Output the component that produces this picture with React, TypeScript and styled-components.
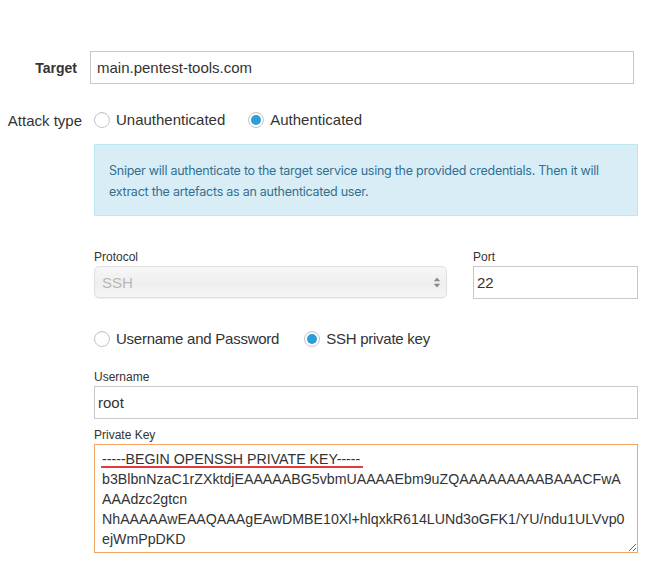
import React from 'react';
import styled, { createGlobalStyle } from 'styled-components';

const GlobalStyle = createGlobalStyle`
  html, body { margin: 0; padding: 0; background: #fff; }
  body { font-family: "Liberation Sans", Arial, Helvetica, sans-serif; color: #333; }
  * { box-sizing: border-box; }
`;

const Page = styled.div`
  width: 670px;
  height: 566px;
  overflow: hidden;
  padding-top: 51px;
`;

const Row = styled.div<{ $mt?: number }>`
  display: grid;
  grid-template-columns: 82px 1fr;
  align-items: center;
  margin-top: ${p => p.$mt ?? 0}px;
`;

const RowLabel = styled.label<{ $bold?: boolean; $pr?: number }>`
  text-align: right;
  font-size: ${p => (p.$bold ? 14 : 15)}px;
  font-weight: ${p => (p.$bold ? 700 : 400)};
  padding-right: ${p => p.$pr ?? 0}px;
  color: #333;
  white-space: nowrap;
`;

const TextInput = styled.input<{ $pl?: number; $ml?: number; $w?: number }>`
  display: block;
  height: 33px;
  width: ${p => (p.$w ? `${p.$w}px` : '100%')};
  margin-left: ${p => p.$ml ?? 0}px;
  border: 1px solid #c8c8c8;
  border-radius: 0;
  padding: 0 ${p => p.$pl ?? 3}px;
  font-family: "Liberation Sans", Arial, Helvetica, sans-serif;
  font-size: 15px;
  color: #333;
  background: #fff;
  outline: none;
`;

const RadioGroup = styled.div<{ $gap: number; $ml?: number }>`
  display: flex;
  align-items: center;
  gap: ${p => p.$gap}px;
  height: 20px;
  margin-left: ${p => p.$ml ?? 0}px;
`;

const RadioOption = styled.label<{ $tight?: boolean }>`
  display: flex;
  align-items: center;
  gap: 6px;
  font-size: 15px;
  letter-spacing: ${p => (p.$tight ? '-0.25px' : '0')};
  color: #333;
  line-height: 20px;
  white-space: nowrap;
`;

const RadioCircle = styled.span<{ $checked?: boolean }>`
  position: relative;
  width: 16px;
  height: 16px;
  border-radius: 50%;
  border: 1px solid #c6c6c6;
  background: #fff;
  box-shadow: inset 0 1px 1px rgba(0, 0, 0, 0.06);
  flex: none;
  &::after {
    content: '';
    display: ${p => (p.$checked ? 'block' : 'none')};
    position: absolute;
    left: 2px;
    top: 2px;
    width: 10px;
    height: 10px;
    border-radius: 50%;
    background: #2b9ed8;
  }
`;

const Section = styled.div`
  margin-left: 94px;
  width: 544px;
`;

const Alert = styled.div`
  margin-top: 14px;
  height: 72px;
  background: #d9edf7;
  border: 1px solid #bce8f1;
  padding: 15px 14px 0 14px;
  font-family: Inter, "Liberation Sans", sans-serif;
  font-size: 12.5px;
  letter-spacing: -0.25px;
  line-height: 21px;
  color: #31708f;
`;

const TwoCols = styled.div`
  display: grid;
  grid-template-columns: 353px 165px;
  column-gap: 26px;
  margin-top: 34px;
`;

const FieldLabel = styled.div<{ $mt?: number }>`
  font-size: 12px;
  line-height: 14px;
  color: #333;
  margin-top: ${p => p.$mt ?? 0}px;
  margin-bottom: 2px;
`;

const SelectWrap = styled.div`
  position: relative;
  margin-top: 1px;
`;

const Select = styled.select`
  display: block;
  width: 100%;
  height: 32px;
  appearance: none;
  -webkit-appearance: none;
  border: 1px solid #d2d2d2;
  border-radius: 5px;
  background: linear-gradient(#f4f4f4, #e8e8e8 55%, #f2f2f2);
  box-shadow: 0 1px 1px rgba(0, 0, 0, 0.1);
  padding: 0 7px;
  font-family: "Liberation Sans", Arial, Helvetica, sans-serif;
  font-size: 15px;
  color: #9a9a9a;
  outline: none;
`;

const SelectArrows = styled.svg`
  position: absolute;
  right: 6px;
  top: 11px;
  pointer-events: none;
`;

const RadioRow = styled.div`
  margin-top: 30px;
`;

const TextAreaWrap = styled.div`
  position: relative;
`;

const KeyArea = styled.textarea`
  display: block;
  width: 544px;
  height: 109px;
  border: 1px solid #f2a767;
  border-radius: 0;
  padding: 4px 7px;
  font-family: "Liberation Sans", Arial, Helvetica, sans-serif;
  font-size: 14.2px;
  line-height: 20px;
  color: #333;
  white-space: pre;
  overflow: hidden;
  resize: vertical;
  outline: none;
  background: #fff;
`;

const SpellMark = styled.span`
  position: absolute;
  left: 7px;
  top: 22px;
  width: 262px;
  height: 2px;
  background: #e5393a;
  pointer-events: none;
`;

const keyText = [
  '-----BEGIN OPENSSH PRIVATE KEY-----',
  'b3BlbnNzaC1rZXktdjEAAAAABG5vbmUAAAAEbm9uZQAAAAAAAAABAAACFwA',
  'AAAdzc2gtcn',
  'NhAAAAAwEAAQAAAgEAwDMBE10Xl+hlqxkR614LUNd3oGFK1/YU/ndu1ULVvp0',
  'ejWmPpDKD',
  'bA4d6eXmZ3v1fTkL9wQ2sJ8nR0cYhUpE7aKxGz5VqB3oNiM1tWlD6rSyF4g',
].join('\n');

export default function App() {
  return (
    <>
      <GlobalStyle />
      <Page>
        <Row>
          <RowLabel $bold $pr={5}>Target</RowLabel>
          <TextInput $pl={6} $ml={8} $w={544} defaultValue="main.pentest-tools.com" />
        </Row>
        <Row $mt={26}>
          <RowLabel>Attack type</RowLabel>
          <RadioGroup $gap={23} $ml={12}>
            <RadioOption>
              <RadioCircle />
              Unauthenticated
            </RadioOption>
            <RadioOption>
              <RadioCircle $checked />
              Authenticated
            </RadioOption>
          </RadioGroup>
        </Row>
        <Section>
          <Alert>
            Sniper will authenticate to the target service using the provided credentials. Then it will
            extract the artefacts as an authenticated user.
          </Alert>
          <TwoCols>
            <div>
              <FieldLabel>Protocol</FieldLabel>
              <SelectWrap>
                <Select disabled defaultValue="SSH">
                  <option>SSH</option>
                </Select>
                <SelectArrows width="8" height="11" viewBox="0 0 8 11">
                  <path d="M4 0.5 L7.2 4.3 H0.8 Z" fill="#8a8a8a" />
                  <path d="M4 10.5 L7.2 6.7 H0.8 Z" fill="#8a8a8a" />
                </SelectArrows>
              </SelectWrap>
            </div>
            <div>
              <FieldLabel>Port</FieldLabel>
              <TextInput defaultValue="22" />
            </div>
          </TwoCols>
          <RadioRow>
            <RadioGroup $gap={25}>
              <RadioOption $tight>
                <RadioCircle />
                Username and Password
              </RadioOption>
              <RadioOption $tight>
                <RadioCircle $checked />
                SSH private key
              </RadioOption>
            </RadioGroup>
          </RadioRow>
          <FieldLabel $mt={21}>Username</FieldLabel>
          <TextInput defaultValue="root" />
          <FieldLabel $mt={9}>Private Key</FieldLabel>
          <TextAreaWrap>
            <KeyArea wrap="off" defaultValue={keyText} spellCheck={false} />
            <SpellMark />
          </TextAreaWrap>
        </Section>
      </Page>
    </>
  );
}
